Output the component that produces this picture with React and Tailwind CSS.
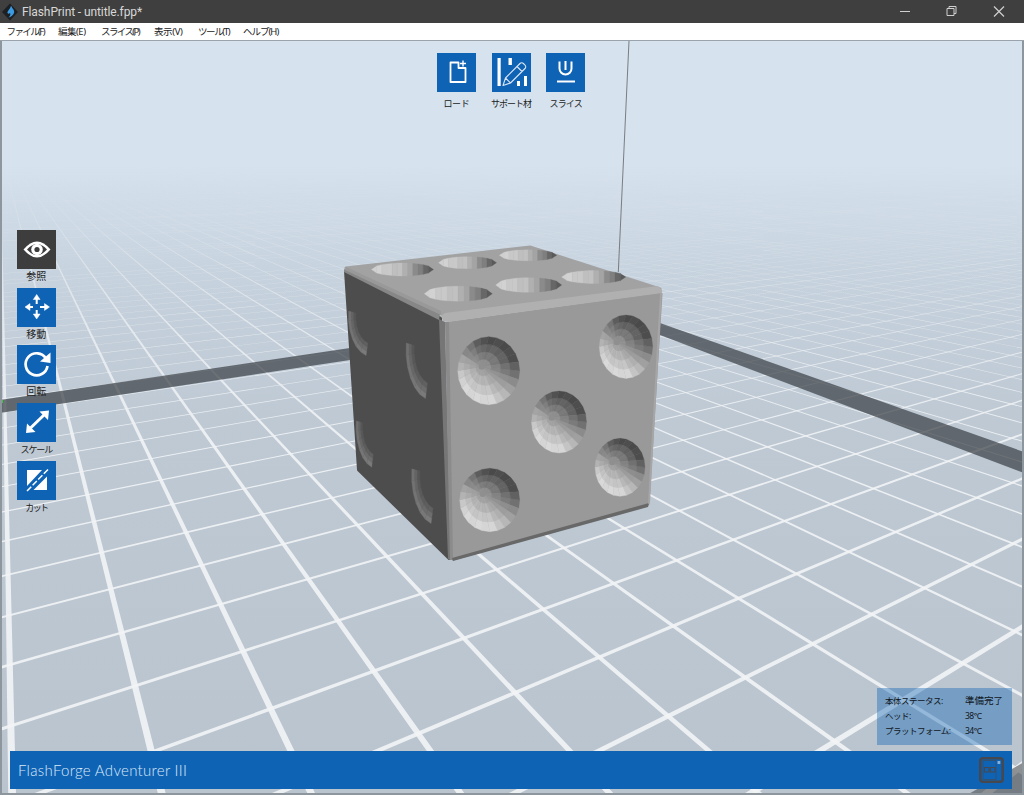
import React from 'react';

// ground plane projection: two vanishing points + origin
const A = [1800, 150];
const B = [0, 145];
const O = [135, 686];
const al = 0.0694;
const be = 0.1093;
const proj = (u, v) => {
  const a = al * u;
  const b = be * v;
  const w = a + b + 1;
  return [(a * A[0] + b * B[0] + O[0]) / w, (a * A[1] + b * B[1] + O[1]) / w];
};
const pts = (list) => list.map((p) => `${p[0].toFixed(1)},${p[1].toFixed(1)}`).join(' ');

const HALF_U = 0.026;
const HALF_V = 0.024;
const gridLines = [];
for (let k = -3; k <= 130; k++) {
  const vMin = (0.1 - 1 - al * k) / be;
  gridLines.push(pts([proj(k - HALF_U, vMin), proj(k + HALF_U, vMin), proj(k + HALF_U, 400), proj(k - HALF_U, 400)]));
}
for (let k = -12; k <= 130; k++) {
  const uMin = (0.1 - 1 - be * k) / al;
  gridLines.push(pts([proj(uMin, k - HALF_V), proj(uMin, k + HALF_V), proj(400, k + HALF_V), proj(400, k - HALF_V)]));
}

const grey = (n) => {
  const c = Math.max(40, Math.min(235, Math.round(n)));
  return `rgb(${c},${c},${c})`;
};

// faceted dimple on the front face
const Dimple = ({ cx, cy, rx, ry, ax, ay }) => {
  const polys = [];
  const sectors = 24;
  const rings = 4;
  for (let s = 0; s < sectors; s++) {
    const t0 = (s / sectors) * Math.PI * 2;
    const t1 = ((s + 1) / sectors) * Math.PI * 2;
    const mid = (t0 + t1) / 2;
    const light = Math.max(-1, Math.min(1, Math.cos(mid - (120 * Math.PI) / 180) * 1.2));
    for (let r = 0; r < rings; r++) {
      const at = (t, f) => [ax + (cx + rx * Math.cos(t) - ax) * f, ay + (cy + ry * Math.sin(t) - ay) * f];
      const f0 = r / rings;
      const f1 = (r + 1) / rings;
      const base = light > 0 ? 152 + light * (12 + r * 17) : 148 + light * (6 + r * 22);
      const fill = grey(base + (s % 2 ? 2 : -2));
      polys.push(<polygon key={`${s}-${r}`} points={pts([at(t0, f0), at(t1, f0), at(t1, f1), at(t0, f1)])} fill={fill} stroke={fill} strokeWidth="0.3" />);
    }
  }
  return <g>{polys}<circle cx={ax} cy={ay} r="3" fill="#8f8f8f" /></g>;
};

// dimple seen edge-on on the dark left face
const Crescent = ({ cx, cy, rx, ry }) => {
  const polys = [];
  const steps = 6;
  const from = 188;
  const to = 104;
  for (let s = 0; s < steps; s++) {
    const t0 = ((from + ((to - from) * s) / steps) * Math.PI) / 180;
    const t1 = ((from + ((to - from) * (s + 1)) / steps) * Math.PI) / 180;
    for (let r = 0; r < 3; r++) {
      const f0 = 0.68 + r * 0.107;
      const f1 = f0 + 0.107;
      const at = (t, f) => [cx + rx * f * Math.cos(t), cy + ry * f * Math.sin(t)];
      const fill = grey(86 + r * 13 + s * 2);
      polys.push(<polygon key={`${s}-${r}`} points={pts([at(t0, f0), at(t1, f0), at(t1, f1), at(t0, f1)])} fill={fill} stroke={fill} strokeWidth="0.3" />);
    }
  }
  return <g>{polys}</g>;
};

// flat looking dimple on the top face, shaded in strips from left to right
const TopDimple = ({ cx, cy, rx, ry }) => {
  const polys = [];
  const n = 12;
  for (let s = 0; s < n; s++) {
    const p0 = s / n;
    const p1 = (s + 1) / n;
    const edge = (p) => {
      const c = p * 2 - 1;
      return [cx + rx * c, ry * Math.sqrt(Math.max(0, 1 - c * c))];
    };
    const [x0, h0] = edge(p0);
    const [x1, h1] = edge(p1);
    const mid = (p0 + p1) / 2;
    const shade = mid < 0.5 ? 212 - mid * 50 : 187 - (mid - 0.5) * 220;
    const fill = grey(shade + (s % 2 ? 4 : -2));
    polys.push(<polygon key={s} points={pts([[x0, cy - h0], [x1, cy - h1], [x1, cy + h1], [x0, cy + h0]])} fill={fill} stroke={fill} strokeWidth="0.3" />);
  }
  return <g>{polys}</g>;
};

const frontDimples = [
  { cx: 488.7, cy: 370.7, rx: 31, ry: 34, ax: 481.7, ay: 366.7 },
  { cx: 626, cy: 346.7, rx: 26.7, ry: 31.7, ax: 616.7, ay: 342.3 },
  { cx: 559, cy: 422, rx: 27.5, ry: 31, ax: 551.7, ay: 417.7 },
  { cx: 489.7, cy: 500, rx: 30, ry: 31.7, ax: 482.7, ay: 494 },
  { cx: 620, cy: 467.3, rx: 25, ry: 29, ax: 612.3, ay: 462.3 },
];
const sideDimples = [
  { cx: 371.7, cy: 316.7, rx: 23.3, ry: 40 },
  { cx: 431.7, cy: 350, rx: 25.7, ry: 50 },
  { cx: 376.7, cy: 426.7, rx: 20.7, ry: 41.7 },
  { cx: 437.3, cy: 475.7, rx: 25.7, ry: 49.3 },
];
const topDimples = [
  { cx: 402.5, cy: 269.5, rx: 31, ry: 6.5 },
  { cx: 467.5, cy: 262.7, rx: 29, ry: 6 },
  { cx: 528, cy: 255.3, rx: 28.7, ry: 5.5 },
  { cx: 458.3, cy: 293.7, rx: 34, ry: 7.5 },
  { cx: 528.7, cy: 285, rx: 33, ry: 7.3 },
  { cx: 593.7, cy: 277, rx: 32, ry: 6.5 },
];

const Scene = () => (
  <svg className="absolute inset-0" width="1024" height="754" viewBox="0 41 1024 754">
    <defs>
      <linearGradient id="floor" x1="0" y1="41" x2="0" y2="795" gradientUnits="userSpaceOnUse">
        <stop offset="0" stopColor="#d6e2ee" />
        <stop offset="0.17" stopColor="#d6e2ee" />
        <stop offset="0.3" stopColor="#c6d2de" />
        <stop offset="0.5" stopColor="#bec9d4" />
        <stop offset="1" stopColor="#bac4ce" />
      </linearGradient>
      <linearGradient id="fade" x1="0" y1="165" x2="0" y2="450" gradientUnits="userSpaceOnUse">
        <stop offset="0" stopColor="#d6e2ee" stopOpacity="1" />
        <stop offset="0.12" stopColor="#d0dce8" stopOpacity="0.82" />
        <stop offset="0.35" stopColor="#c8d4e0" stopOpacity="0.45" />
        <stop offset="0.62" stopColor="#c2cdd8" stopOpacity="0.18" />
        <stop offset="1" stopColor="#bec9d4" stopOpacity="0" />
      </linearGradient>
    </defs>
    <rect x="0" y="41" width="1024" height="754" fill="url(#floor)" />
    {gridLines.map((p, i) => (
      <polygon key={i} points={p} fill="#f1f3f5" fillOpacity="0.92" />
    ))}
    <rect x="0" y="165" width="1024" height="285" fill="url(#fade)" />
    <rect x="0" y="41" width="1024" height="124" fill="#d6e2ee" />

    {/* build area edges */}
    <polygon points="0,400 350,348 350,360 0,413" fill="#3c4146" fillOpacity="0.72" />
    <polygon points="660,323 1024,452 1024,473 660,335" fill="#3c4146" fillOpacity="0.72" />
    <polygon points="967,795 1024,762 1024,795" fill="#3c4146" fillOpacity="0.55" />
    <rect x="0" y="400" width="3" height="3" fill="#39c83a" />
    <line x1="629" y1="41" x2="618.3" y2="272" stroke="#6d7276" strokeWidth="0.9" />

    {/* dice */}
    <polygon points="345,271 441,318 449,559 358,470" fill="#4d4d4d" stroke="#4d4d4d" strokeWidth="2" strokeLinejoin="round" />
    <polygon points="346,268 530,247 660,289 443,315" fill="#a2a2a2" stroke="#a2a2a2" strokeWidth="3" strokeLinejoin="round" />
    <polygon points="344,269 440,314 439,320 344,272" fill="#878787" />
    <polygon points="346,267 441,311 441,315 345,270" fill="#999999" />
    {topDimples.map((d, i) => (
      <TopDimple key={i} {...d} />
    ))}
    <polygon points="449,323 661,294 648,504 453,559" fill="#999999" stroke="#999999" strokeWidth="3" strokeLinejoin="round" />
    <polygon points="441,316 445,313 658,286 662,290 662,293 448,322 443,321" fill="#b0b0b0" />
    <polygon points="439,319 445,322 451,560 448,559" fill="#767676" />
    <polygon points="445,322 449,322 453,560 450,560" fill="#8b8b8b" />
    <polygon points="452,558 649,503 648,507 453,561" fill="#686868" />
    <polygon points="660,293 662,293 650,503 648,504" fill="#a6a6a6" />
    {frontDimples.map((d, i) => (
      <Dimple key={i} {...d} />
    ))}
    {sideDimples.map((d, i) => (
      <Crescent key={i} {...d} />
    ))}
  </svg>
);

const btnIcons = {
  load: (
    <svg width="39" height="39" viewBox="0 0 39 39" fill="none" stroke="#fff" strokeWidth="1.8">
      <path d="M13.500 9.500h8v5.500h7v14h-15z" strokeLinejoin="round" />
      <path d="M26 7.500v6M23 10.500h6" strokeWidth="1.400" />
    </svg>
  ),
  support: (
    <svg width="39" height="39" viewBox="0 0 39 39" fill="none">
      <rect x="5.500" y="5" width="3.200" height="28" fill="#fff" />
      <rect x="16.500" y="5" width="3.400" height="7" fill="#fff" />
      <rect x="25" y="28" width="3" height="5" fill="#fff" />
      <rect x="32" y="23" width="3" height="10" fill="#fff" />
      <path d="M11 32.500l2.500-7.500L28 10.500a2.400 2.400 0 0 1 3.400 0l1.600 1.600a2.400 2.400 0 0 1 0 3.400L18.500 30zM13.500 25l5 5M25 13.500l5 5" stroke="#dbe6f3" strokeWidth="1.100" strokeLinejoin="round" />
    </svg>
  ),
  slice: (
    <svg width="39" height="39" viewBox="0 0 39 39" fill="none" stroke="#fff" strokeWidth="2">
      <path d="M13.500 8.500v7a6 6 0 0 0 12 0v-7M19.500 8v9" />
      <path d="M11 28.500h18" />
    </svg>
  ),
  eye: (
    <svg width="39" height="39" viewBox="0 0 39 39">
      <path d="M6.500 19.500Q20 3.500 33.500 19.500Q20 35.500 6.500 19.500z" fill="#fff" />
      <path d="M10 19.500Q20 8.500 30 19.500Q20 30.500 10 19.500z" fill="#3d3d3d" />
      <circle cx="20" cy="19.500" r="5.800" fill="#fff" />
      <circle cx="20" cy="19.500" r="2.600" fill="#3d3d3d" />
    </svg>
  ),
  move: (
    <svg width="39" height="39" viewBox="0 0 39 39" fill="#fff" stroke="#fff">
      <path d="M19.700 11v5M19.700 22v5M11 19h5M23 19h5.500" strokeWidth="2" fill="none" />
      <path d="M19.700 6.500l-3.400 5h6.800zM19.700 31l-3.400-5h6.800zM8 19l5-3.400v6.800zM32.500 19l-5-3.400v6.800z" strokeWidth="0.5" />
    </svg>
  ),
  rotate: (
    <svg width="39" height="39" viewBox="0 0 39 39" fill="none">
      <path d="M29 13.500A11 11 0 1 0 30.500 21" stroke="#fff" strokeWidth="2.700" />
      <path d="M23 16.500l10.500 1.500V7.500z" fill="#fff" />
    </svg>
  ),
  scale: (
    <svg width="39" height="39" viewBox="0 0 39 39" fill="none">
      <path d="M13 25.500L28 11" stroke="#fff" strokeWidth="3" />
      <path d="M32 7.500l-9.500 1 8.500 8.500zM9 30l1-9.500 8.500 8.500z" fill="#fff" />
    </svg>
  ),
  cut: (
    <svg width="39" height="39" viewBox="0 0 39 39" fill="none">
      <path d="M10 9h15L10 25z" fill="#fff" />
      <path d="M30 15.500V29H16.500z" fill="#fff" />
      <path d="M31 8.500L9 31" stroke="#fff" strokeWidth="1.500" strokeDasharray="6 2" />
    </svg>
  ),
};

const ToolButton = ({ icon, label, dark, labelClass }) => (
  <div className="flex flex-col items-center w-[54.7px]">
    <div className={`w-[39px] h-[39px] ${dark ? 'bg-[#3d3d3d]' : 'bg-[#0f63b5]'}`}>{btnIcons[icon]}</div>
    <span className={`leading-[11px] text-[#222] whitespace-nowrap ${labelClass}`}>{label}</span>
  </div>
);

const menus = [
  { label: 'ファイル(F)', w: 'w-[51.5px]', t: 'tracking-[-1.6px]' },
  { label: '編集(E)', w: 'w-[43px]', t: 'tracking-[-0.5px]' },
  { label: 'スライス(P)', w: 'w-[53px]', t: 'tracking-[-1.6px]' },
  { label: '表示(V)', w: 'w-[44px]', t: 'tracking-[-0.4px]' },
  { label: 'ツール(T)', w: 'w-[45px]', t: 'tracking-[-1.4px]' },
  { label: 'ヘルプ(H)', w: 'w-[45px]', t: 'tracking-[-1px]' },
];

const statusRows = [
  { name: 'status', left: '本体ステータス:', right: '準備完了', cls: 'text-[9.5px] tracking-normal' },
  { name: 'head', left: 'ヘッド:', right: '38℃', cls: '' },
  { name: 'bed', left: 'プラットフォーム:', right: '34℃', cls: '' },
];

export default function App() {
  return (
    <div className="h-screen w-[1024px] flex flex-col overflow-hidden font-['Noto_Sans','Noto_Sans_CJK_JP',sans-serif]">
      {/* Title bar */}
      <div className="h-[23px] bg-[#3f3f3f] flex items-center shrink-0">
        <svg className="ml-[2px]" width="16" height="18" viewBox="0 0 16 18">
          <path d="M0 9L8 0.500 16 9 8 17.500z" fill="#1d1f22" />
          <path d="M9 2.500c1 3 4 4.500 3 7.500-.7 2.300-3.500 4-5.500 4.500 1.500-1.500 2.500-3 1.500-4.500-1 1-2 1-2.500 0C5 8 8.500 6 9 2.500z" fill="#3a9be2" />
        </svg>
        <span className="ml-[4px] text-[12px] tracking-[-0.1px] text-[#d8d8d8] whitespace-nowrap font-['Roboto',sans-serif]">FlashPrint - untitle.fpp*</span>
        <svg className="ml-auto" width="124" height="23" viewBox="900 0 124 23" fill="none" stroke="#d0d0d0" strokeWidth="1">
          <path d="M900 11.500h10" />
          <path d="M947 8.500h7v7h-7zM949 8.500v-2h7v7h-2" />
          <path d="M994 6.500l10 10M1004 6.500l-10 10" strokeWidth="1.200" />
        </svg>
      </div>

      {/* Menu bar */}
      <div className="h-[18px] bg-white border-b border-[#9aa3ab] flex items-center pl-[6.5px] shrink-0">
        {menus.map((m) => (
          <span key={m.label} className={`${m.w} ${m.t} text-[9.5px] leading-[17px] text-[#222] whitespace-nowrap`}>{m.label}</span>
        ))}
      </div>

      {/* 3D viewport */}
      <div className="relative flex-1 overflow-hidden">
        <Scene />

        <div className="absolute top-[12px] left-[429px] flex">
          <ToolButton icon="load" label="ロード" labelClass="text-[9px] mt-[6px] tracking-[-0.4px]" />
          <ToolButton icon="support" label="サポート材" labelClass="text-[9px] mt-[6px] tracking-[-1px]" />
          <ToolButton icon="slice" label="スライス" labelClass="text-[9px] mt-[6px] tracking-[-0.8px]" />
        </div>

        <div className="absolute top-[189px] left-[9px] flex flex-col gap-[18.7px]">
          <ToolButton icon="eye" label="参照" dark labelClass="text-[10px] mt-[2px] -mb-[13px]" />
          <ToolButton icon="move" label="移動" labelClass="text-[10px] mt-[2px] -mb-[13px]" />
          <ToolButton icon="rotate" label="回転" labelClass="text-[10px] mt-[2px] -mb-[13px]" />
          <ToolButton icon="scale" label="スケール" labelClass="text-[9px] mt-[2px] -mb-[13px] tracking-[-1.100px]" />
          <ToolButton icon="cut" label="カット" labelClass="text-[9px] mt-[2px] -mb-[13px] tracking-[-1.600px]" />
        </div>

        <div className="absolute right-[12px] bottom-[50px] w-[135px] h-[57px] bg-[#0f63b5]/40 pl-[8px] pt-[5px] text-[8.5px] leading-[15px] tracking-[-0.5px] text-[#10161d]">
          {statusRows.map((r) => (
            <div key={r.name} className="flex">
              <span className="w-[80px] whitespace-nowrap">{r.left}</span>
              <span className={`whitespace-nowrap ${r.cls}`}>{r.right}</span>
            </div>
          ))}
        </div>

        <div className="absolute left-[10px] right-[12px] bottom-[6px] h-[38px] bg-[#0f63b5] flex items-center justify-between pl-[8px] pr-[8px]">
          <span className="text-[15px] font-light text-[#dde9f5] font-['Lato',sans-serif] tracking-[0.3px]">FlashForge Adventurer III</span>
          <svg width="25" height="26" viewBox="0 0 25 26" fill="none">
            <rect x="1.300" y="1.300" width="22.400" height="23.400" rx="2.500" stroke="#45484e" strokeWidth="2.600" />
            <rect x="18.500" y="4" width="2.800" height="3" fill="#7fb0e0" />
            <path d="M4 3.500h13v19H4z" stroke="#45484e" strokeWidth="0.6" />
            <path d="M5.500 10.500h4.500v4.500H5.500zM11.500 10.500H16v4.500h-4.500zM10 12.700h1.500" stroke="#45484e" strokeWidth="1.100" />
          </svg>
        </div>

        <div className="absolute inset-0 border-x-2 border-b-2 border-[#8d959d] pointer-events-none" />
      </div>
    </div>
  );
}
